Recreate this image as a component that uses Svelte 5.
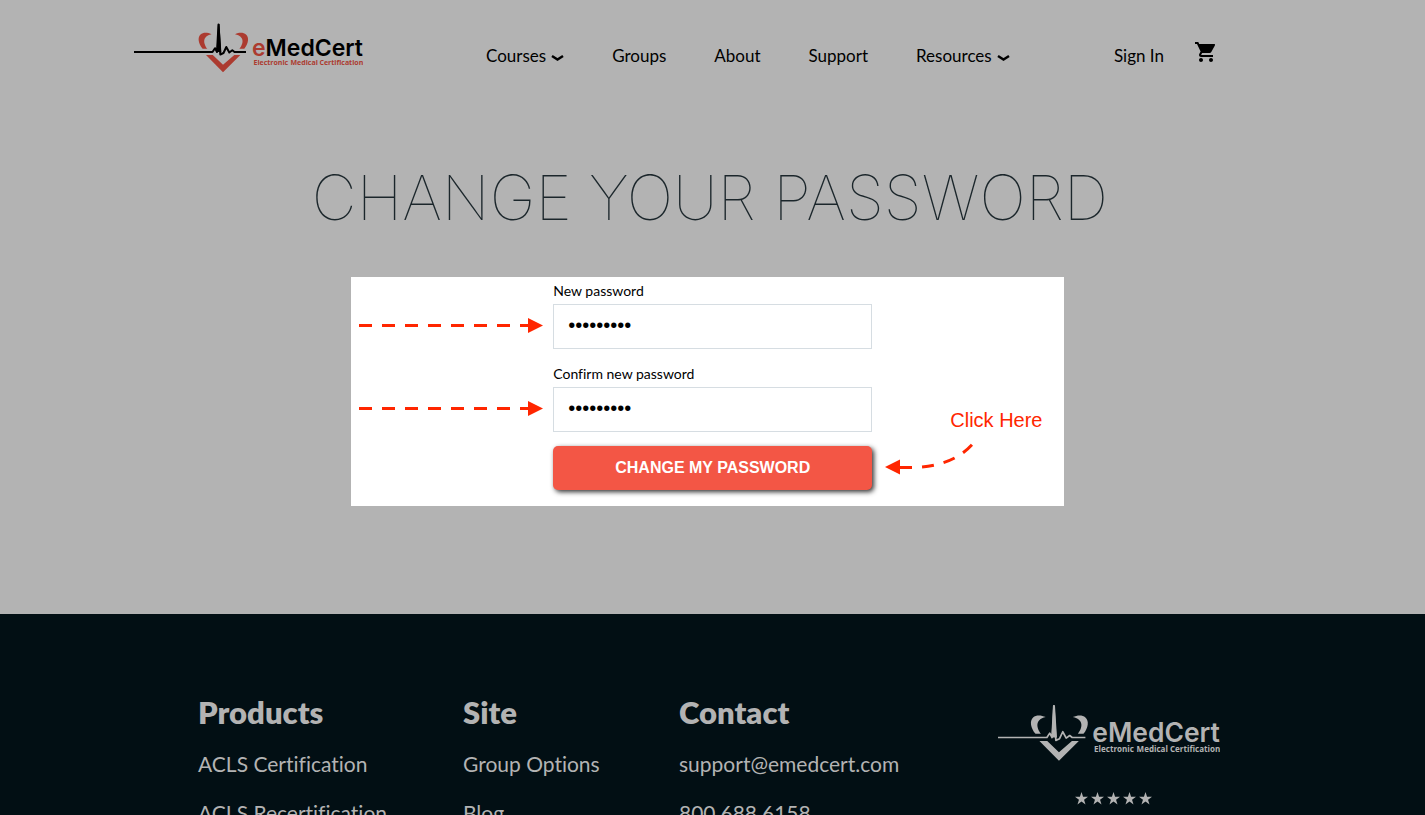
<script lang="ts">
  const nav = [
    { label: 'Courses', menu: true },
    { label: 'Groups', menu: false },
    { label: 'About', menu: false },
    { label: 'Support', menu: false },
    { label: 'Resources', menu: true },
  ];

  const columns = [
    { title: 'Products', links: ['ACLS Certification', 'ACLS Recertification'] },
    { title: 'Site', links: ['Group Options', 'Blog'] },
    { title: 'Contact', links: ['support@emedcert.com', '800.688.6158'] },
  ];

  let password = $state('password1');
  let confirmation = $state('password1');
</script>

{#snippet logo(viewBox: string, lineStart: number)}
  <svg class="logo" {viewBox} role="img" aria-label="eMedCert">
    <g class="heart">
      <path d="M77.500 12.200C73 10.200 69 10.400 66.500 12.500C63.300 15.500 64.300 21.500 68.600 26.800H73.300C69.700 22 67.500 14.500 77.500 12.200Z" />
      <path d="M101 12.200C105.500 10.200 109.500 10.400 112 12.500C115.400 15.500 114.500 21.500 110.300 26.800H105.400C109.300 22 111.300 14.500 101 12.200Z" />
      <path d="M72 33H78.800L89 42.800L100.300 33H106.300L89 50.200Z" />
    </g>
    <path class="pulse" d="M{lineStart} 30H78.500L81 26.200L83 30L84.500 2.500L86.300 32.500L89.500 31L92.300 25L95.300 30.500L98.300 28.300L100.500 30H112" />
    <path class="peak" d="M82.500 30L84 2H85.500L87.300 30Z" />
    <text class="name" x="118" y="33.500"><tspan class="accent">e</tspan>MedCert</text>
    <g class="tagline">
      <text x="119.500" y="43">Electronic</text>
      <text x="156.500" y="43">Medical</text>
      <text x="185.500" y="43">Certification</text>
    </g>
  </svg>
{/snippet}

{#snippet arrow()}
  <svg class="arrow" viewBox="0 0 184 16" aria-hidden="true">
    <path class="dash" d="M0 8.500H169" stroke-dasharray="13 10" />
    <path class="head" d="M169 1V16L184 8.500Z" />
  </svg>
{/snippet}

<div class="page">
  <header>
    <a class="brand" href="#home">{@render logo('0 0 229 52', 0)}</a>
    <nav aria-label="Main">
      {#each nav as item}
        <a href="#{item.label.toLowerCase()}">
          {item.label}
          {#if item.menu}
            <svg class="chevron" viewBox="0 0 13 8" aria-hidden="true"><path d="M1 2L6.500 5.500L12 2" /></svg>
          {/if}
        </a>
      {/each}
    </nav>
    <div class="account">
      <a href="#sign-in">Sign In</a>
      <a class="cart" href="#cart" aria-label="Cart">
        <svg viewBox="1 2 21 20" aria-hidden="true">
          <path d="M7 18c-1.100 0-1.990.9-1.990 2S5.900 22 7 22s2-.9 2-2-.9-2-2-2zM1 2v2h2l3.600 7.590-1.350 2.450c-.16.280-.25.610-.25.960 0 1.100.9 2 2 2h12v-2H7.420c-.14 0-.25-.11-.25-.25l.03-.12.900-1.630h7.450c.75 0 1.410-.41 1.750-1.030l3.580-6.490A1 1 0 0 0 20 4H5.210l-.94-2H1zm16 16c-1.100 0-1.990.9-1.990 2s.89 2 1.990 2 2-.9 2-2-.9-2-2-2z" />
        </svg>
      </a>
    </div>
  </header>

  <main>
    <h1>CHANGE YOUR PASSWORD</h1>
    <section class="panel">
      <form onsubmit={(e) => e.preventDefault()}>
        <div class="field">
          <label for="password">New password</label>
          <input id="password" type="password" bind:value={password} />
          {@render arrow()}
        </div>
        <div class="field">
          <label for="confirmation">Confirm new password</label>
          <input id="confirmation" type="password" bind:value={confirmation} />
          {@render arrow()}
        </div>
        <button type="submit">CHANGE MY PASSWORD</button>
      </form>
      <div class="hint">
        <span>Click Here</span>
        <svg viewBox="0 0 90 36" aria-hidden="true">
          <path class="dash" d="M15 27.500C49 28.500 72 22 88.500 3" stroke-dasharray="12 10" />
          <path class="head" d="M15 19.500V34.500L0 27Z" />
        </svg>
      </div>
    </section>
  </main>

  <footer>
    {#each columns as column}
      <div class="column">
        <h2>{column.title}</h2>
        <ul>
          {#each column.links as link}
            <li><a href="#{column.title.toLowerCase()}">{link}</a></li>
          {/each}
        </ul>
      </div>
    {/each}
    <div class="reviews">
      {@render logo('36 0 193 52', 36)}
      <div class="stars" role="img" aria-label="5 out of 5 stars">
        {#each Array(5) as _}
          <svg viewBox="0 0 24 24"><path d="M12 0l2.900 8.700H24l-7.300 5.400L19.400 23 12 17.600 4.600 23l2.700-8.900L0 8.700h9.100z" /></svg>
        {/each}
      </div>
    </div>
  </footer>
</div>

<style>
  :global(body) {
    margin: 0;
  }
  .page {
    height: 100vh;
    overflow: hidden;
    display: flex;
    flex-direction: column;
    background: #b3b3b3;
    color: #000;
    font-family: Lato, 'Open Sans', sans-serif;
    font-variant-ligatures: none;
  }
  a {
    color: inherit;
    text-decoration: none;
  }

  header {
    flex: none;
    display: flex;
    align-items: flex-start;
    box-sizing: border-box;
    width: 100%;
    max-width: 1157px;
    height: 112px;
    margin: 0 auto;
    padding: 22px 75px 0 0;
    font-size: 17px;
    line-height: 24px;
  }
  .logo {
    display: block;
    width: 100%;
  }
  .brand {
    width: 229px;
  }
  .heart,
  .accent {
    fill: #ac3b30;
  }
  .pulse {
    fill: none;
    stroke: #000;
    stroke-width: 2;
    stroke-linejoin: round;
  }
  .name {
    font: 600 23px Inter, sans-serif;
  }
  .tagline {
    fill: #ac3b30;
    font: 700 7px 'Open Sans', sans-serif;
  }
  nav {
    display: flex;
    gap: 48px;
    margin: 22px 0 0 123px;
  }
  nav a {
    display: flex;
    align-items: center;
    gap: 5px;
  }
  .chevron {
    width: 13px;
    height: 8px;
    margin-top: 4px;
    fill: none;
    stroke: #000;
    stroke-width: 2.5;
  }
  .account {
    display: flex;
    gap: 31px;
    margin: 22px 0 0 auto;
  }
  .cart svg {
    display: block;
    width: 21px;
    height: 20px;
    margin-top: -2px;
  }

  main {
    flex: none;
    box-sizing: border-box;
    height: 502px;
    padding: 50px 10px 0 0;
  }
  h1 {
    margin: 0;
    padding-left: 5px;
    text-align: center;
    color: #1b262b;
    font: 100 62px/72px Inter, 'Liberation Sans', sans-serif;
  }
  .panel {
    box-sizing: border-box;
    width: 50vw;
    min-height: 229px;
    margin: 43px auto 0;
    display: grid;
    grid-template-columns: 202px 319px 1fr;
    padding-top: 4px;
    background: #fff;
  }
  form {
    grid-column: 2;
  }
  .field {
    position: relative;
    margin-bottom: 15px;
  }
  .field + .field {
    margin-bottom: 14px;
  }
  label {
    display: block;
    margin-bottom: 3px;
    font-size: 14px;
    line-height: 20px;
  }
  input {
    display: block;
    box-sizing: border-box;
    width: 100%;
    height: 45px;
    padding: 0 14px 2px;
    border: 1px solid #d6dde2;
    border-radius: 0;
    background: #fff;
    color: #000;
    font: 20px 'Liberation Sans', sans-serif;
  }
  button {
    width: 100%;
    height: 44px;
    border: 0;
    border-radius: 5px;
    background: #f35645;
    box-shadow: 2px 2px 5px #333;
    color: #fff;
    font: bold 16px 'Liberation Sans', sans-serif;
  }
  .arrow {
    position: absolute;
    right: 329px;
    top: 36px;
    width: 184px;
    height: 16px;
  }
  .dash {
    fill: none;
    stroke: #ff2600;
    stroke-width: 3;
  }
  .head {
    fill: #ff2600;
  }
  .hint {
    padding: 127px 0 0 13px;
    color: #ff2600;
    font: 20px/24px 'Liberation Sans', sans-serif;
  }
  .hint span {
    display: block;
    padding-left: 65px;
  }
  .hint svg {
    display: block;
    width: 90px;
    height: 36px;
    margin-top: 8px;
  }

  footer {
    flex: 1;
    display: grid;
    grid-template-columns: 265px 216px 319px 222px;
    justify-content: center;
    padding: 79px 7px 0 0;
    background: #020f14;
    color: #b3b3b3;
    font-size: 21px;
  }
  h2 {
    margin: 0;
    font-size: 31px;
    font-weight: 800;
    line-height: 38px;
  }
  ul {
    margin: 18px 0 0;
    padding: 0;
    list-style: none;
  }
  li {
    margin-bottom: 20px;
    line-height: 29px;
  }
  .reviews {
    padding-top: 10px;
  }
  .reviews :is(.heart, .accent, .name, .tagline, .peak) {
    fill: #b3b3b3;
  }
  .reviews .pulse {
    stroke: #b3b3b3;
    stroke-width: 1.5;
  }
  .stars {
    display: flex;
    justify-content: center;
    gap: 3px;
    margin-top: 29px;
    padding-left: 9px;
    fill: #b3b3b3;
  }
  .stars svg {
    width: 13px;
    height: 13px;
  }
</style>
